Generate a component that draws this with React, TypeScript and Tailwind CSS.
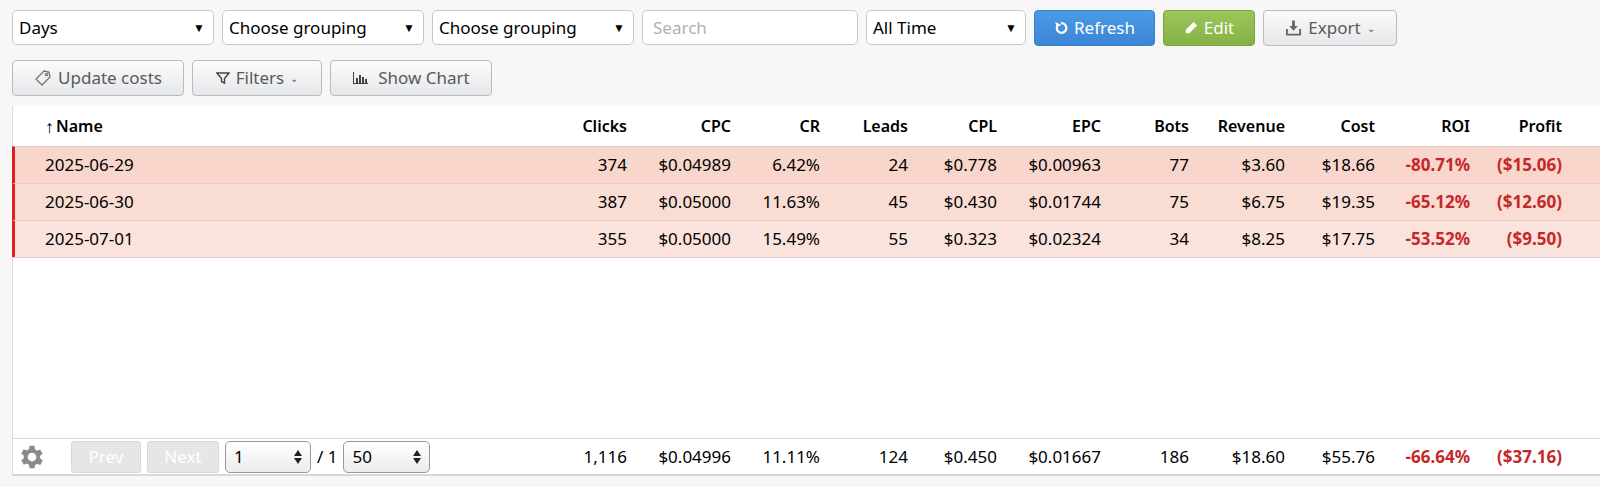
import React from "react";

const cols = "grid grid-cols-[1fr_90px_104px_89px_88px_89px_104px_88px_96px_90px_95px_92px] pr-[38px] items-center";

const rows = [
  { n: "2025-06-29", v: ["374", "$0.04989", "6.42%", "24", "$0.778", "$0.00963", "77", "$3.60", "$18.66", "-80.71%", "($15.06)"], bg: "bg-[#f8d6cb]" },
  { n: "2025-06-30", v: ["387", "$0.05000", "11.63%", "45", "$0.430", "$0.01744", "75", "$6.75", "$19.35", "-65.12%", "($12.60)"], bg: "bg-[#f9ddd3]" },
  { n: "2025-07-01", v: ["355", "$0.05000", "15.49%", "55", "$0.323", "$0.02324", "34", "$8.25", "$17.75", "-53.52%", "($9.50)"], bg: "bg-[#fae3dc]" },
];
const totals = ["1,116", "$0.04996", "11.11%", "124", "$0.450", "$0.01667", "186", "$18.60", "$55.76", "-66.64%", "($37.16)"];
const heads = ["Clicks", "CPC", "CR", "Leads", "CPL", "EPC", "Bots", "Revenue", "Cost", "ROI", "Profit"];

const Caret = () => <span className="text-[12px] text-black">▼</span>;

function Sel({ w, label }: { w: string; label: string }) {
  return (
    <div className={`${w} h-[35px] bg-white border border-[#c8c8c8] rounded-[5px] flex items-center justify-between pl-[6px] pr-[8px] text-[17px] text-black`}>
      <span>{label}</span>
      <Caret />
    </div>
  );
}

function Spin({ v, w }: { v: string; w: string }) {
  return (
    <div className={`${w} h-[32px] rounded-[5px] border border-[#999] bg-gradient-to-b from-white to-[#ececec] flex items-center justify-between px-[8px] text-[17px]`}>
      <span>{v}</span>
      <svg width="8" height="14" viewBox="0 0 8 14" fill="#222"><path d="M4 0l4 6H0z" /><path d="M0 8h8l-4 6z" /></svg>
    </div>
  );
}

const btn = "h-[36px] rounded-[4px] border flex items-center justify-center gap-[6px] text-[17px]";
const gray = `${btn} border-[#b8bcc2] bg-gradient-to-b from-[#fbfbfb] to-[#e6e7e9] text-[#555a61]`;

export default function App() {
  const num = "font-['Liberation_Sans',sans-serif] text-[17px]";
  return (
    <div className="w-[1600px] h-[487px] bg-[#f7f7f7] font-['Open_Sans',sans-serif] overflow-hidden">
      <div className="flex gap-[8px] pl-[12px] pt-[10px]">
        <Sel w="w-[202px]" label="Days" />
        <Sel w="w-[202px]" label="Choose grouping" />
        <Sel w="w-[202px]" label="Choose grouping" />
        <div className="w-[216px] h-[35px] bg-white border border-[#c8c8c8] rounded-[5px] flex items-center pl-[10px] text-[17px] text-[#b0b0b0]">Search</div>
        <Sel w="w-[160px]" label="All Time" />
        <div className={`${btn} w-[121px] border-[#3a7fc7] bg-gradient-to-b from-[#4c9be6] to-[#3a85d6] text-white`}>
          <svg width="14" height="14" viewBox="0 0 16 16" fill="none" stroke="white" strokeWidth="2.6"><path d="M4 5 A5.5 5.5 0 1 0 8 2.5" /><path d="M2 2 L3.5 6 L7.5 4.5 Z" fill="white" strokeWidth="1" /></svg>
          Refresh
        </div>
        <div className={`${btn} w-[92px] border-[#7ea23e] bg-gradient-to-b from-[#9cc65a] to-[#86b145] text-white`}>
          <svg width="14" height="14" viewBox="0 0 16 16" fill="white"><path d="M11 1l4 4-9 9H2v-4z" /></svg>
          Edit
        </div>
        <div className={`${gray} w-[134px]`}>
          <svg width="17" height="16" viewBox="0 0 18 16" fill="#666"><path d="M7.5 0h3v6h3l-4.5 5L4.5 6h3z" /><path d="M1 9h2v5h12V9h2v7H1z" /></svg>
          Export <span className="text-[10px]">⌄</span>
        </div>
      </div>
      <div className="flex gap-[8px] pl-[12px] pt-[14px]">
        <div className={`${gray} w-[172px]`}>
          <svg width="18" height="18" viewBox="0 0 18 18" fill="none" stroke="#777" strokeWidth="1.3"><path d="M10 2l5 1 1 5-8 8-6-6z" /><circle cx="12.5" cy="5.5" r="1.2" /></svg>
          Update costs
        </div>
        <div className={`${gray} w-[130px]`}>
          <svg width="14" height="14" viewBox="0 0 14 14" fill="none" stroke="#444" strokeWidth="1.4"><path d="M1 2h12L8.5 7.5V12l-3-1.5v-3z" /></svg>
          Filters <span className="text-[10px]">⌄</span>
        </div>
        <div className={`${gray} w-[162px]`}>
          <svg width="16" height="14" viewBox="0 0 16 14" fill="#444"><path d="M1 1h1v11h14v1H1z" /><rect x="4" y="7" width="2" height="5" /><rect x="7" y="4" width="2" height="8" /><rect x="10" y="6" width="2" height="6" /><rect x="13" y="8" width="2" height="4" /></svg>
          <span className="ml-[4px]">Show Chart</span>
        </div>
      </div>
      <div className="mt-[10px] ml-[12px] h-[370px] bg-white border-l border-[#dcdcdc] flex flex-col text-[16px] text-black">
        <div className={`${cols} h-[40px] font-semibold`}>
          <div className="pl-[32px] flex items-center gap-[2px]"><span className="text-[18px]">↑</span>Name</div>
          {heads.map(h => <div key={h} className="text-right">{h}</div>)}
        </div>
        {rows.map(r => (
          <div key={r.n} className={`${cols} h-[37px] ${r.bg} border-t border-[#e6cfc8] border-l-[3px] border-l-[#e02020] -ml-[1px]`}>
            <div className={`pl-[30px] ${num}`}>{r.n}</div>
            {r.v.map((x, i) => <div key={i} className={`text-right ${num} ${i >= 9 ? "text-[#c62828] font-bold" : ""}`}>{x}</div>)}
          </div>
        ))}
        <div className="border-t border-[#e0d0cc]" />
        <div className="flex-1" />
        <div className={`${cols} h-[38px] border-t border-b-2 border-[#d8d8d8]`}>
          <div className="flex items-center pl-[4px] gap-[6px]">
            <svg width="30" height="30" viewBox="0 0 24 24" fill="#8a8a8a"><path d="M19.4 13a7.5 7.5 0 000-2l2.1-1.6-2-3.5-2.5 1a7.6 7.6 0 00-1.7-1L15 3h-4l-.4 2.7a7.6 7.6 0 00-1.7 1l-2.5-1-2 3.5L6.5 11a7.5 7.5 0 000 2l-2.1 1.6 2 3.5 2.5-1a7.6 7.6 0 001.7 1L11 21h4l.4-2.7a7.6 7.6 0 001.7-1l2.5 1 2-3.5zM13 15.5a3.5 3.5 0 110-7 3.5 3.5 0 010 7z" transform="translate(-1 0)" /></svg>
            <div className="ml-[18px] w-[70px] h-[32px] rounded-[3px] border border-[#d8d8d8] bg-[#e6e6e6] text-white flex items-center justify-center text-[17px]">Prev</div>
            <div className="w-[72px] h-[32px] rounded-[3px] border border-[#d8d8d8] bg-[#e6e6e6] text-white flex items-center justify-center text-[17px]">Next</div>
            <Spin v="1" w="w-[86px]" />
            <span className="text-[17px]">/ 1</span>
            <Spin v="50" w="w-[87px]" />
          </div>
          {totals.map((x, i) => <div key={i} className={`text-right ${num} ${i >= 9 ? "text-[#c62828] font-bold" : ""}`}>{x}</div>)}
        </div>
      </div>
    </div>
  );
}
